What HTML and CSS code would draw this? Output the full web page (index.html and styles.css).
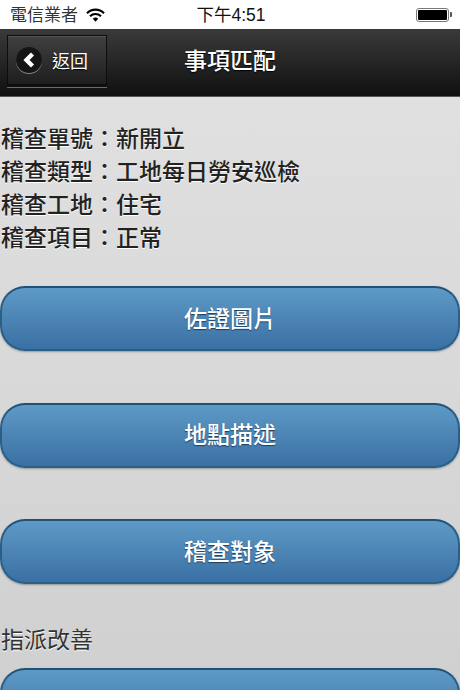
FILE: index.html
```html
<!DOCTYPE html>
<html lang="zh-Hant">
<head>
<meta charset="utf-8">
<title>事項匹配</title>
<link rel="stylesheet" href="styles.css">
</head>
<body>
<div class="status">
  <div class="status-left">
    <span>電信業者</span>
    <svg class="wifi" width="19" height="14" viewBox="0 0 19 14"><path d="M1 5.2 A12 12 0 0 1 18 5.2" fill="none" stroke="#000" stroke-width="2.2"/><path d="M4 8.2 A8 8 0 0 1 15 8.2" fill="none" stroke="#000" stroke-width="2.2"/><path d="M6.8 10.8 A4 4 0 0 1 12.2 10.8 L9.5 13.8 Z" fill="#000"/></svg>
  </div>
  <div class="status-time">下午4:51</div>
  <div class="status-right">
    <span class="battery"><span class="battery-fill"></span></span><span class="battery-tip"></span>
  </div>
</div>
<header class="nav">
  <a class="back">
    <span class="back-circle"><svg width="16" height="18" viewBox="0 0 16 18"><path d="M11.5 3 L5.5 9 L11.5 15" fill="none" stroke="#fff" stroke-width="4.4"/></svg></span>
    <span class="back-label">返回</span>
  </a>
  <h1 class="nav-title">事項匹配</h1>
</header>
<main class="content">
  <div class="info">
    <p>稽查單號：新開立</p>
    <p>稽查類型：工地每日勞安巡檢</p>
    <p>稽查工地：住宅</p>
    <p>稽查項目：正常</p>
  </div>
  <div class="actions">
    <button class="btn">佐證圖片</button>
    <button class="btn">地點描述</button>
    <button class="btn">稽查對象</button>
  </div>
  <div class="assign-label">指派改善</div>
  <button class="btn btn-last"></button>
</main>
</body>
</html>
```
FILE: styles.css
```css
* { box-sizing: border-box; }
html, body { margin: 0; padding: 0; height: 100%; overflow: hidden; }
body {
  width: 460px;
  height: 690px;
  font-family: "Noto Sans CJK TC", "Liberation Sans", sans-serif;
  background: #fff;
  display: flex;
  flex-direction: column;
}
.status {
  height: 29px;
  flex: none;
  background: #fff;
  display: grid;
  grid-template-columns: 1fr auto 1fr;
  align-items: center;
  padding: 0 8px 2px 10px;
  color: #111;
  font-size: 17px;
}
.status-left { display: flex; align-items: center; gap: 8px; color: #333; }
.wifi { display: block; margin-top: 2px; }
.status-time { font-family: "Liberation Sans", "Noto Sans CJK TC", sans-serif; font-size: 17.5px; color: #111; }
.status-right { display: flex; justify-content: flex-end; align-items: center; padding-top: 2px; }
.battery {
  width: 33px; height: 14px;
  border: 1px solid #777;
  border-radius: 3px;
  padding: 1px;
  display: block;
}
.battery-fill { display: block; height: 100%; background: #000; border-radius: 1px; }
.battery-tip { width: 2px; height: 5px; background: #555; border-radius: 0 1px 1px 0; margin-left: 1px; }
.nav {
  height: 68px;
  flex: none;
  background: linear-gradient(#3a3a3a, #101010);
  display: grid;
  grid-template-columns: 1fr;
  align-items: start;
  justify-items: center;
  border-bottom: 1px solid #555;
}
.nav > * { grid-area: 1 / 1; }
.back {
  justify-self: start;
  margin-left: 7px;
  margin-top: 6px;
  width: 100px;
  height: 50px;
  display: flex;
  align-items: center;
  gap: 10px;
  padding-left: 8px;
  border: 1px solid #0d0d0d;
  background: linear-gradient(#404040, #1e1e1e);
  box-shadow: 0 2px 0 #101010, 0 3px 0 #6a6a6a, inset 0 1px 0 #555;
  color: #fff;
}
.back-circle {
  width: 26px; height: 26px;
  border-radius: 50%;
  background: #151515;
  box-shadow: 0 1px 0 #888;
  display: flex; align-items: center; justify-content: center;
}
.back-label { font-size: 18px; line-height: 1; margin-top: -1px; text-shadow: 0 1px 1px #000; }
.nav-title {
  margin: 19px 0 0;
  font-size: 23px;
  font-weight: 500;
  color: #fff;
  line-height: 1;
  text-shadow: 0 1px 1px #000;
}
.content {
  flex: 1;
  min-height: 0;
  background: linear-gradient(#e0e0e0, #d0d0d0);
  padding-top: 24px;
  overflow: hidden;
}
.info { padding-left: 1px; color: #222; font-size: 23px; font-weight: 500; text-shadow: 0 1px 0 #fff; }
.info p { margin: 0; height: 33px; line-height: 33px; }
.actions { margin-top: 33px; display: flex; flex-direction: column; gap: 51.5px; }
.btn {
  display: block;
  width: 460px;
  height: 65px;
  border: 2px solid #2a5f88;
  border-top-color: #1f5179;
  border-radius: 25px;
  background: linear-gradient(#5e9ac6, #3a70a4);
  color: #fff;
  font-family: inherit;
  font-size: 23px;
  font-weight: 500;
  text-shadow: 0 1px 1px #1d3f5f;
  box-shadow: 0 1px 2px rgba(0,0,0,.3);
  padding: 0 0 4px;
}
.assign-label { margin-top: 38px; height: 32px; line-height: 32px; font-size: 23px; color: #333; padding-left: 1px; text-shadow: 0 1px 0 #fff; }
.btn-last { margin-top: 14px; }
```
